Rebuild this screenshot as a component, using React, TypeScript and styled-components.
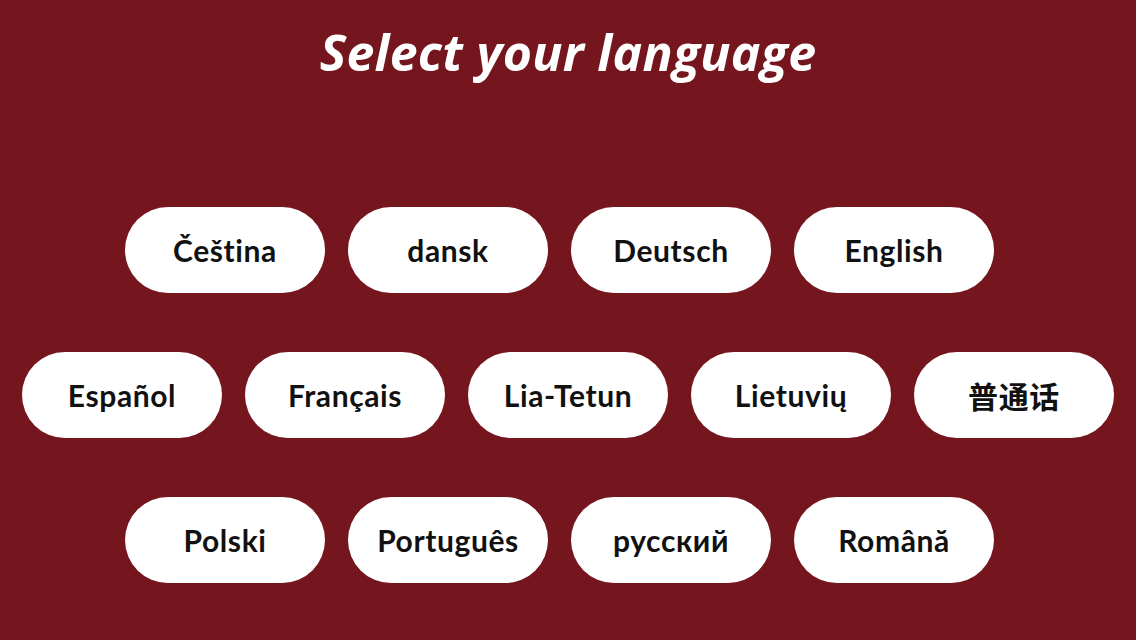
import React from "react";
import styled, { createGlobalStyle } from "styled-components";

const rows: string[][] = [
  ["Čeština", "dansk", "Deutsch", "English"],
  ["Español", "Français", "Lia-Tetun", "Lietuvių", "普通话"],
  ["Polski", "Português", "русский", "Română"],
];

const GlobalStyle = createGlobalStyle`
  html, body {
    margin: 0;
    padding: 0;
    background: #75161e;
  }
`;

const Page = styled.div`
  width: 1136px;
  height: 640px;
  background: #75161e;
  display: flex;
  flex-direction: column;
  align-items: center;
  overflow: hidden;
`;

const Title = styled.h1`
  margin: 20px 0 0;
  height: 64px;
  line-height: 64px;
  font-family: "Open Sans", "Liberation Sans", sans-serif;
  font-style: italic;
  font-weight: 700;
  font-size: 50px;
  color: #fff;
  letter-spacing: 0.3px;
`;

const Grid = styled.div`
  margin-top: 123px;
  display: flex;
  flex-direction: column;
  gap: 59px;
  width: 100%;
`;

const Row = styled.div<{ $shift?: number }>`
  display: flex;
  justify-content: center;
  gap: 23px;
  padding-right: ${(p) => p.$shift ?? 0}px;
`;

const Pill = styled.button`
  width: 200px;
  height: 86px;
  border: none;
  border-radius: 43px;
  background: #fff;
  color: #111;
  font-family: "Lato", "Noto Sans CJK SC", sans-serif;
  font-weight: 700;
  font-size: 30px;
  letter-spacing: 0.6px;
  font-variant-ligatures: none;
  cursor: pointer;
  padding: 0;
`;

export default function App() {
  return (
    <Page>
      <GlobalStyle />
      <Title>Select your language</Title>
      <Grid>
        {rows.map((row, i) => (
          <Row key={i} $shift={row.length === 4 ? 17 : 0}>
            {row.map((lang) => (
              <Pill key={lang}>{lang}</Pill>
            ))}
          </Row>
        ))}
      </Grid>
    </Page>
  );
}
